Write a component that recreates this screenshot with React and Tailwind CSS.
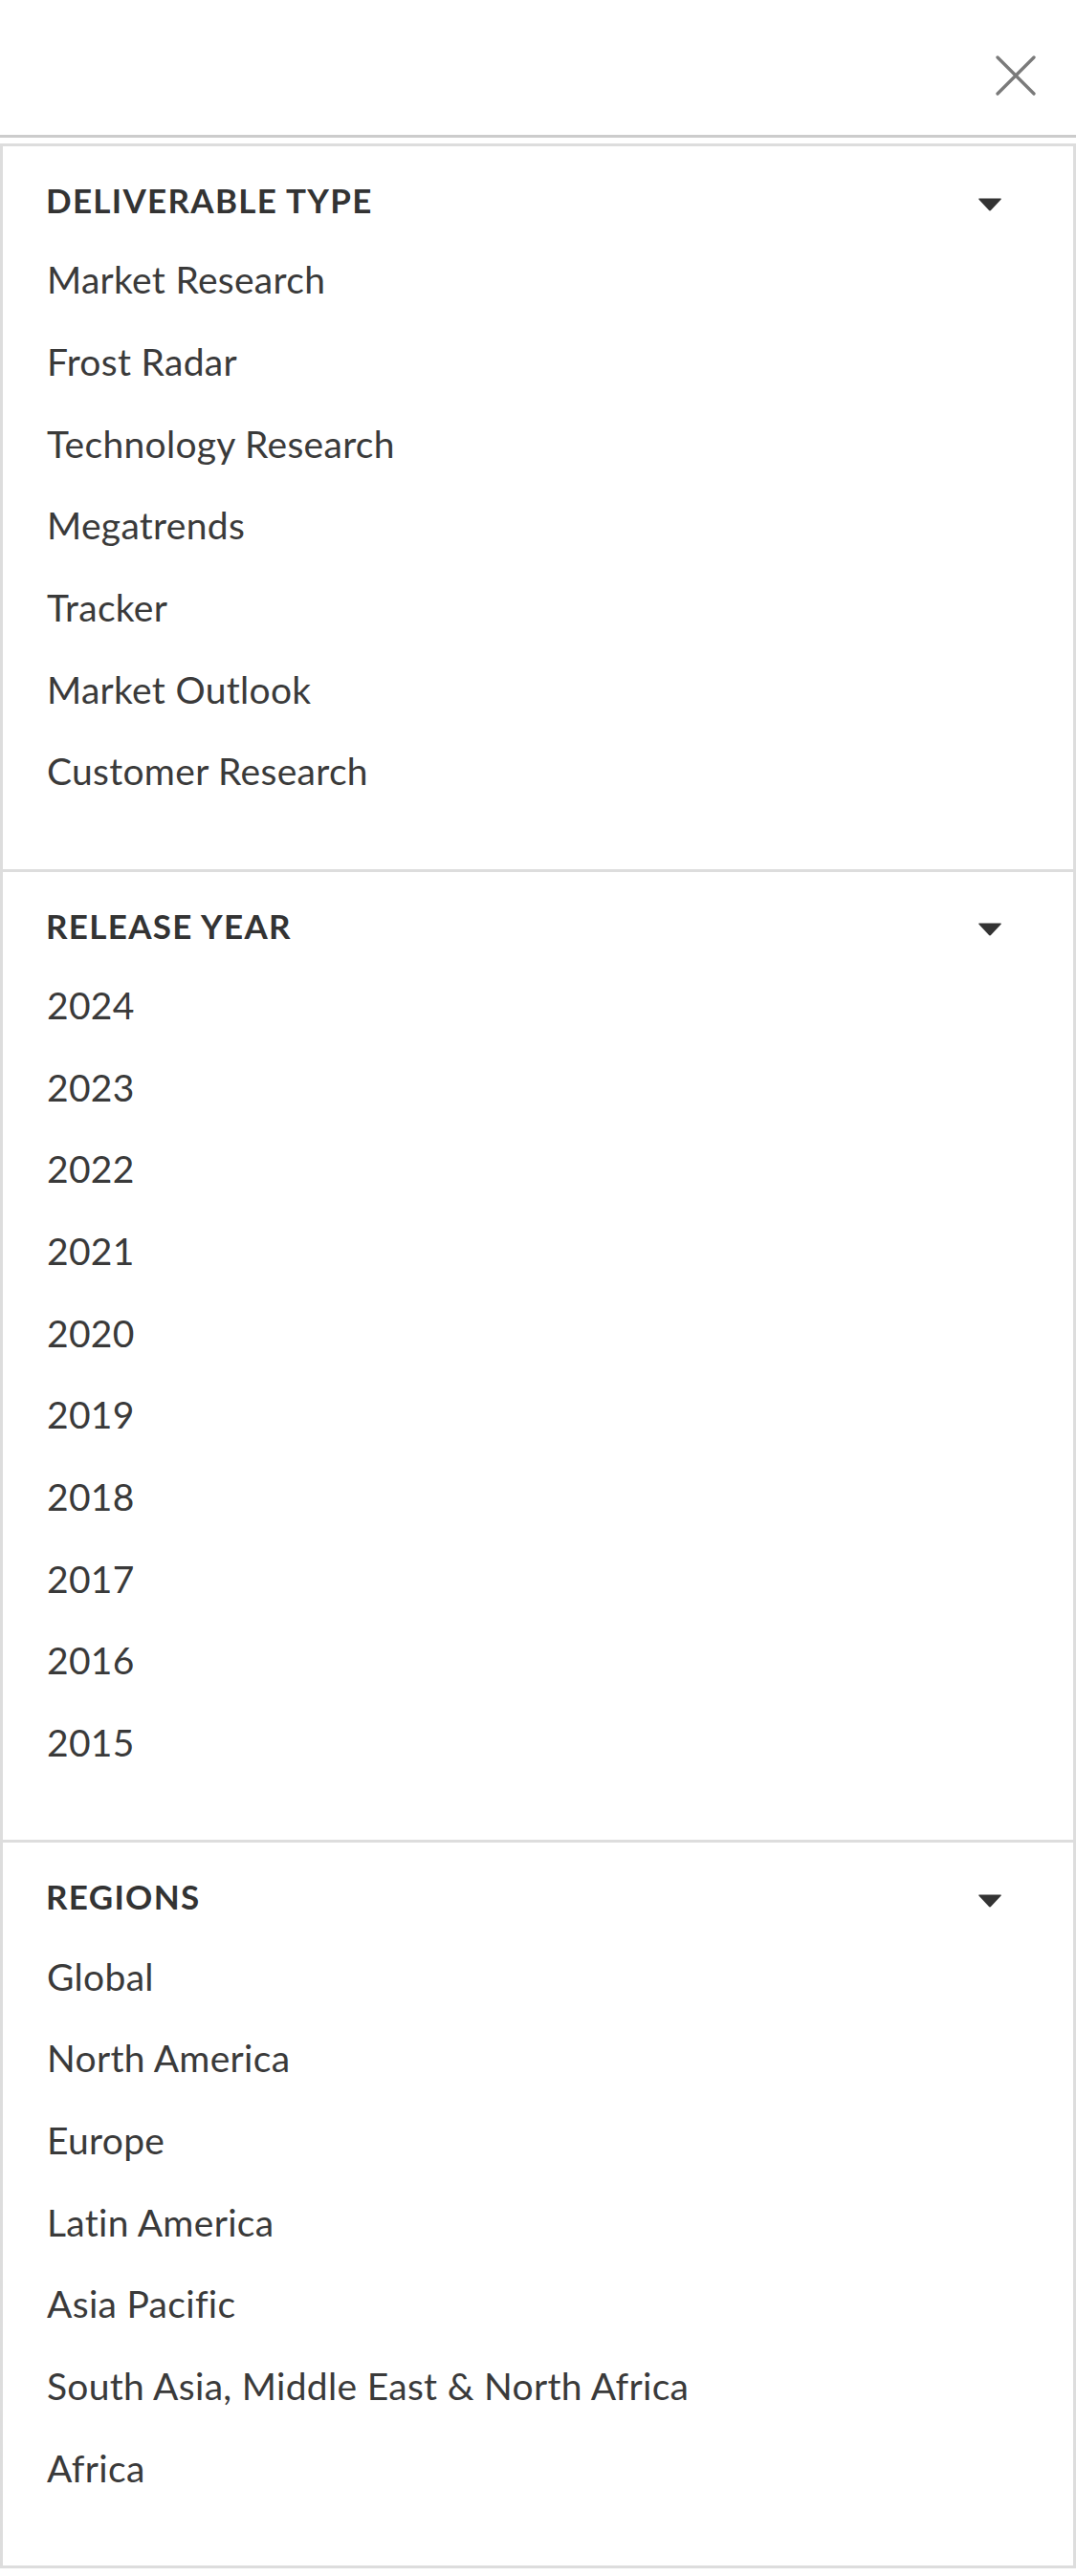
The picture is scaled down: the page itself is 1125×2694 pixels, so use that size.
import React from 'react'

const sections = [
  {
    title: 'DELIVERABLE TYPE',
    items: [
      'Market Research',
      'Frost Radar',
      'Technology Research',
      'Megatrends',
      'Tracker',
      'Market Outlook',
      'Customer Research',
    ],
  },
  {
    title: 'RELEASE YEAR',
    items: ['2024', '2023', '2022', '2021', '2020', '2019', '2018', '2017', '2016', '2015'],
  },
  {
    title: 'REGIONS',
    items: [
      'Global',
      'North America',
      'Europe',
      'Latin America',
      'Asia Pacific',
      'South Asia, Middle East & North Africa',
      'Africa',
    ],
  },
]

function CloseIcon() {
  return (
    <svg width="42" height="42" viewBox="0 0 42 42" fill="none">
      <path d="M2 2 L40 40 M40 2 L2 40" stroke="#7a7a7a" strokeWidth="3.3" strokeLinecap="round" />
    </svg>
  )
}

function Caret() {
  return (
    <svg width="26" height="15" viewBox="0 0 26 15">
      <path d="M2 1.5 H24 Q25.5 1.5 24.5 2.8 L14.2 13.8 Q13 15 11.8 13.8 L1.5 2.8 Q0.5 1.5 2 1.5 Z" fill="#333333" />
    </svg>
  )
}

function FilterSection({ title, items, first }) {
  return (
    <div className={`pt-[17px] pb-[59px] ${first ? '' : 'border-t-[3px] border-[#dddddd]'}`}>
      <div className="h-[80px] flex items-center justify-between pl-[45px] pr-[74px]">
        <span className="text-[35px] font-bold tracking-[1.3px] text-[#333333]">{title}</span>
        <span className="mt-[6px] flex">
          <Caret />
        </span>
      </div>
      {items.map((item) => (
        <div key={item} className="h-[85.67px] flex items-center pl-[46px] text-[39px] tracking-[0.3px] text-[#3a3a3a]">
          {item}
        </div>
      ))}
    </div>
  )
}

export default function App() {
  return (
    <div className="w-full bg-white font-['Lato',sans-serif] leading-tight">
      <div className="h-[144px] border-b-[3px] border-[#cccccc] flex justify-end items-start pt-[58px] pr-[42px]">
        <CloseIcon />
      </div>
      <div className="mt-[6px] border-[3px] border-[#dddddd]">
        {sections.map((s, i) => (
          <FilterSection key={s.title} title={s.title} items={s.items} first={i === 0} />
        ))}
      </div>
    </div>
  )
}
